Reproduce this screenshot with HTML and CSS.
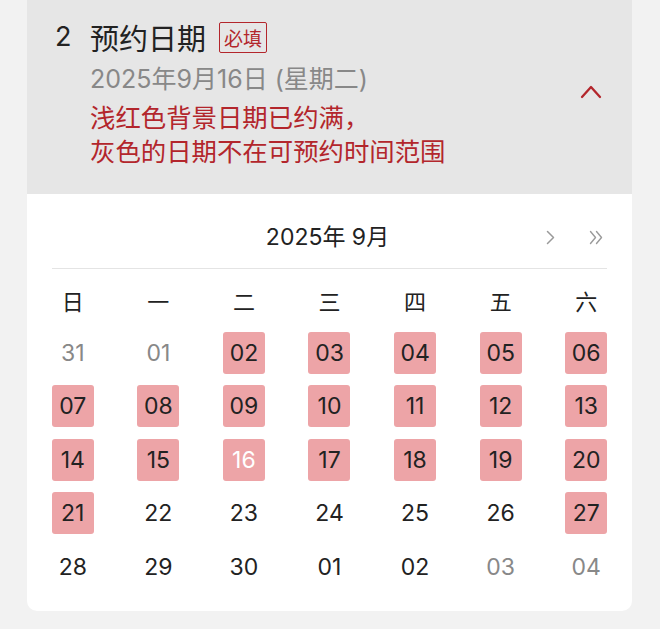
FILE: index.html
```html
<!DOCTYPE html>
<html lang="zh-CN">
<head>
<meta charset="utf-8">
<link rel="stylesheet" href="styles.css">
</head>
<body>
<div class="card">
  <div class="section-head">
    <div class="head-main">
      <div class="title-row">
        <span class="step">2</span>
        <span class="label">预约日期</span>
        <span class="tag">必填</span>
      </div>
      <div class="date-line">2025年9月16日 (星期二)</div>
      <div class="hint">浅红色背景日期已约满，<br>灰色的日期不在可预约时间范围</div>
    </div>
    <svg class="chevron" width="22" height="15" viewBox="0 0 22 15"><polyline points="2,13 11,3 20,13" fill="none" stroke="#b3262c" stroke-width="2.3" stroke-linecap="round" stroke-linejoin="round"/></svg>
  </div>
  <div class="cal">
    <div class="cal-head">
      <span></span>
      <span class="cal-title">2025年 9月</span>
      <span class="cal-nav">
        <svg width="9" height="15" viewBox="0 0 9 15"><polyline points="1.5,1.5 7.5,7.5 1.5,13.5" fill="none" stroke="#9a9a9a" stroke-width="1.5" stroke-linecap="round" stroke-linejoin="round"/></svg>
        <svg width="14" height="15" viewBox="0 0 14 15"><polyline points="1.5,1.5 6.5,7.5 1.5,13.5" fill="none" stroke="#9a9a9a" stroke-width="1.4" stroke-linecap="round" stroke-linejoin="round"/><polyline points="7.5,1.5 12.5,7.5 7.5,13.5" fill="none" stroke="#9a9a9a" stroke-width="1.4" stroke-linecap="round" stroke-linejoin="round"/></svg>
      </span>
    </div>
    <div class="grid">
      <div class="wd">日</div><div class="wd">一</div><div class="wd">二</div><div class="wd">三</div><div class="wd">四</div><div class="wd">五</div><div class="wd">六</div>

      <div class="day"><span class="d muted">31</span></div>
      <div class="day"><span class="d muted">01</span></div>
      <div class="day"><span class="d full">02</span></div>
      <div class="day"><span class="d full">03</span></div>
      <div class="day"><span class="d full">04</span></div>
      <div class="day"><span class="d full">05</span></div>
      <div class="day"><span class="d full">06</span></div>

      <div class="day"><span class="d full">07</span></div>
      <div class="day"><span class="d full">08</span></div>
      <div class="day"><span class="d full">09</span></div>
      <div class="day"><span class="d full">10</span></div>
      <div class="day"><span class="d full">11</span></div>
      <div class="day"><span class="d full">12</span></div>
      <div class="day"><span class="d full">13</span></div>

      <div class="day"><span class="d full">14</span></div>
      <div class="day"><span class="d full">15</span></div>
      <div class="day"><span class="d full selected">16</span></div>
      <div class="day"><span class="d full">17</span></div>
      <div class="day"><span class="d full">18</span></div>
      <div class="day"><span class="d full">19</span></div>
      <div class="day"><span class="d full">20</span></div>

      <div class="day"><span class="d full">21</span></div>
      <div class="day"><span class="d">22</span></div>
      <div class="day"><span class="d">23</span></div>
      <div class="day"><span class="d">24</span></div>
      <div class="day"><span class="d">25</span></div>
      <div class="day"><span class="d">26</span></div>
      <div class="day"><span class="d full">27</span></div>

      <div class="day"><span class="d">28</span></div>
      <div class="day"><span class="d">29</span></div>
      <div class="day"><span class="d">30</span></div>
      <div class="day"><span class="d">01</span></div>
      <div class="day"><span class="d">02</span></div>
      <div class="day"><span class="d muted">03</span></div>
      <div class="day"><span class="d muted">04</span></div>
    </div>
  </div>
</div>
</body>
</html>
```

FILE: styles.css
```css
html, body {
  margin: 0;
  padding: 0;
}
body {
  background: #f2f2f2;
  font-family: "Inter", "Noto Sans CJK SC", sans-serif;
  color: #222;
  width: 660px;
  height: 629px;
  overflow: hidden;
}
.card {
  margin-left: 27px;
  width: 605px;
  background: #fff;
  border-radius: 0 0 10px 10px;
  overflow: hidden;
}
.section-head {
  background: #e6e6e6;
  height: 194px;
  box-sizing: border-box;
  padding: 19px 30px 0 28px;
  display: flex;
  justify-content: space-between;
}
.title-row {
  display: flex;
  align-items: center;
  height: 36px;
}
.step {
  width: 35px;
  font-size: 27px;
  line-height: 36px;
  color: #222;
}
.label {
  font-size: 29px;
  line-height: 36px;
  color: #222;
  font-family: "Noto Sans CJK SC", sans-serif;
}
.tag {
  margin-left: 13px;
  border: 1.5px solid #b3262c;
  border-radius: 2px;
  color: #b3262c;
  font-size: 19px;
  line-height: 29px;
  padding: 0 4px;
  font-family: "Noto Sans CJK SC", sans-serif;
}
.date-line {
  margin: 7px 0 0 35px;
  font-size: 25px;
  line-height: 34px;
  color: #888;
}
.hint {
  margin: 3px 0 0 35px;
  font-size: 25.4px;
  line-height: 34px;
  color: #b3262c;
  font-family: "Noto Sans CJK SC", sans-serif;
}
.chevron {
  margin-top: 65px;
}
.cal {
  padding: 0 3px 18px;
}
.cal-head {
  margin: 0 22px;
  padding: 26px 4px 14px 0;
  border-bottom: 1.5px solid #e4e4e4;
  display: grid;
  grid-template-columns: 1fr auto 1fr;
  align-items: center;
}
.cal-title {
  font-size: 23px;
  line-height: 34px;
  color: #222;
}
.cal-nav {
  display: flex;
  justify-content: flex-end;
  align-items: center;
  gap: 34px;
}
.grid {
  margin-top: 4px;
  display: grid;
  grid-template-columns: repeat(7, 1fr);
  grid-auto-rows: 53.4px;
}
.wd {
  display: flex;
  align-items: center;
  justify-content: center;
  font-size: 22px;
  font-family: "Noto Sans CJK SC", sans-serif;
  color: #222;
}
.day {
  display: flex;
  align-items: center;
  justify-content: center;
}
.d {
  width: 42px;
  height: 42px;
  display: flex;
  align-items: center;
  justify-content: center;
  font-size: 23px;
  color: #222;
  border-radius: 3px;
}
.d.muted {
  color: #888;
}
.d.full {
  background: #eda4a7;
}
.d.selected {
  color: #fff;
}
```
